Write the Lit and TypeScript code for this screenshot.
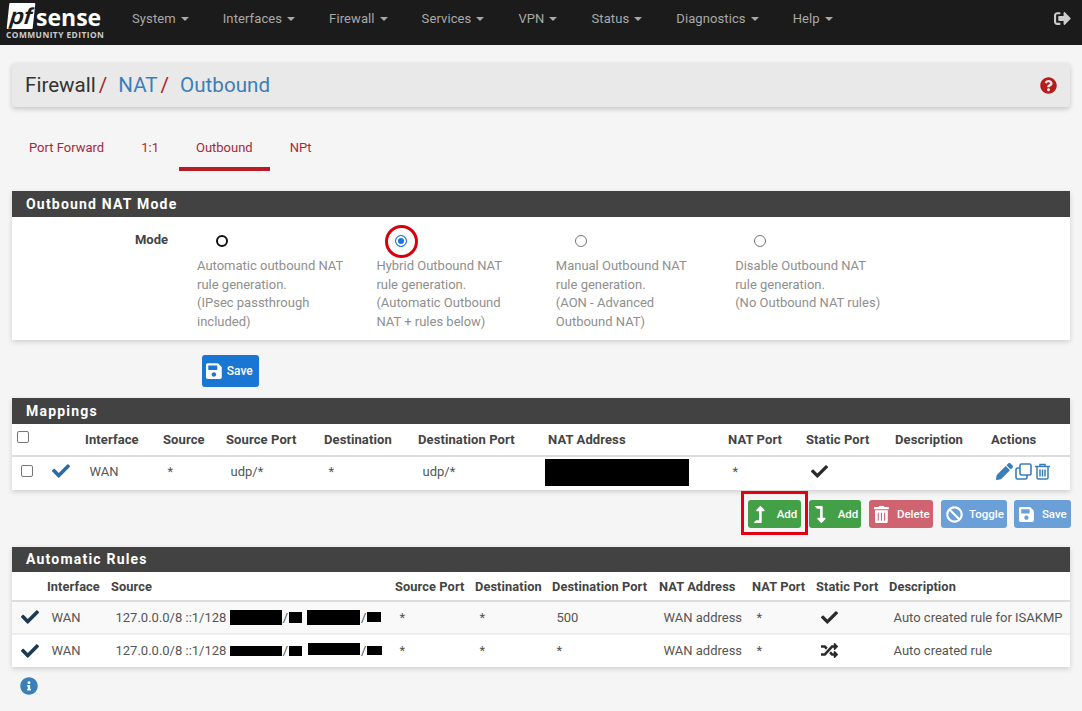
import { LitElement, html, css, svg } from 'lit';
import { customElement } from 'lit/decorators.js';

const icons: Record<string, [string, string]> = {
  check: ['0 0 512 512', 'M173.898 439.404l-166.4-166.4c-9.997-9.997-9.997-26.206 0-36.204l36.203-36.204c9.997-9.998 26.207-9.998 36.204 0L192 312.69 432.095 72.596c9.997-9.997 26.207-9.997 36.204 0l36.203 36.204c9.997 9.997 9.997 26.206 0 36.204l-294.4 294.401c-9.998 9.997-26.207 9.997-36.204-.001z'],
  save: ['0 0 448 512', 'M433.941 129.941l-83.882-83.882A48 48 0 0 0 316.118 32H48C21.49 32 0 53.49 0 80v352c0 26.51 21.49 48 48 48h352c26.51 0 48-21.49 48-48V163.882a48 48 0 0 0-14.059-33.941zM224 416c-35.346 0-64-28.654-64-64 0-35.346 28.654-64 64-64s64 28.654 64 64c0 35.346-28.654 64-64 64zm96-304.52V212c0 6.627-5.373 12-12 12H76c-6.627 0-12-5.373-12-12V108c0-6.627 5.373-12 12-12h228.52c3.183 0 6.235 1.264 8.485 3.515l3.48 3.48A11.996 11.996 0 0 1 320 111.48z'],
  question: ['0 0 512 512', 'M504 256c0 136.997-111.043 248-248 248S8 392.997 8 256C8 119.083 119.043 8 256 8s248 111.083 248 248zM262.655 90c-54.497 0-89.255 22.957-116.549 63.758-3.536 5.286-2.353 12.415 2.715 16.258l34.699 26.31c5.205 3.947 12.621 3.008 16.665-2.122 17.864-22.658 30.113-35.797 57.303-35.797 20.429 0 45.698 13.148 45.698 32.958 0 14.976-12.363 22.667-32.534 33.976C247.128 238.528 216 254.941 216 296v4c0 6.627 5.373 12 12 12h56c6.627 0 12-5.373 12-12v-1.333c0-28.462 83.186-29.647 83.186-106.667 0-58.002-60.165-102-116.531-102zM256 338c-25.365 0-46 20.635-46 46 0 25.364 20.635 46 46 46s46-20.636 46-46c0-25.365-20.635-46-46-46z'],
  info: ['0 0 512 512', 'M256 8C119.043 8 8 119.083 8 256c0 136.997 111.043 248 248 248s248-111.003 248-248C504 119.083 392.957 8 256 8zm0 110c23.196 0 42 18.804 42 42s-18.804 42-42 42-42-18.804-42-42 18.804-42 42-42zm56 254c0 6.627-5.373 12-12 12h-88c-6.627 0-12-5.373-12-12v-24c0-6.627 5.373-12 12-12h12v-64h-12c-6.627 0-12-5.373-12-12v-24c0-6.627 5.373-12 12-12h64c6.627 0 12 5.373 12 12v100h12c6.627 0 12 5.373 12 12v24z'],
  ban: ['0 0 512 512', 'M256 8C119.034 8 8 119.033 8 256s111.034 248 248 248 248-111.034 248-248S392.967 8 256 8zm130.108 117.892c65.448 65.448 70 165.481 20.677 235.637L150.47 105.216c70.204-49.356 170.226-44.735 235.638 20.676zM125.892 386.108c-65.448-65.448-70-165.481-20.677-235.637L361.53 406.784c-70.203 49.356-170.226 44.736-235.638-20.676z'],
  trash: ['0 0 448 512', 'M0 84V56c0-13.3 10.7-24 24-24h112l9.4-18.7c4-8.2 12.3-13.3 21.4-13.3h114.3c9.1 0 17.4 5.1 21.5 13.3L312 32h112c13.3 0 24 10.7 24 24v28c0 6.6-5.4 12-12 12H12C5.4 96 0 90.6 0 84zm416 56v324c0 26.5-21.5 48-48 48H80c-26.5 0-48-21.5-48-48V140c0-6.6 5.4-12 12-12h360c6.6 0 12 5.4 12 12zm-272 68c0-8.8-7.2-16-16-16s-16 7.2-16 16v224c0 8.8 7.2 16 16 16s16-7.2 16-16V208zm96 0c0-8.8-7.2-16-16-16s-16 7.2-16 16v224c0 8.8 7.2 16 16 16s16-7.2 16-16V208zm96 0c0-8.8-7.2-16-16-16s-16 7.2-16 16v224c0 8.8 7.2 16 16 16s16-7.2 16-16V208z'],
  pencil: ['0 0 512 512', 'M497.9 142.1l-46.1 46.1c-4.7 4.7-12.3 4.7-17 0l-111-111c-4.7-4.7-4.7-12.3 0-17l46.1-46.1c18.7-18.7 49.1-18.7 67.9 0l60.1 60.1c18.8 18.7 18.8 49.1 0 67.9zM284.2 99.8L21.6 362.4.4 483.9c-2.9 16.4 11.4 30.6 27.8 27.8l121.5-21.3 262.6-262.6c4.7-4.7 4.7-12.3 0-17l-111-111c-4.8-4.7-12.4-4.7-17.1 0z'],
  random: ['0 0 512 512', 'M504.971 359.029c9.373 9.373 9.373 24.569 0 33.941l-80 79.984c-15.01 15.01-40.971 4.49-40.971-16.971V416h-58.785a12.004 12.004 0 0 1-8.773-3.812l-70.556-75.596 53.333-57.143L352 336h32v-39.981c0-21.438 25.943-31.998 40.971-16.971l80 79.981zM12 176h84l52.781 56.551 53.333-57.143-70.556-75.596A11.999 11.999 0 0 0 122.785 96H12c-6.627 0-12 5.373-12 12v56c0 6.627 5.373 12 12 12zm372 0v39.984c0 21.46 25.961 31.98 40.971 16.971l80-79.984c9.373-9.373 9.373-24.569 0-33.941l-80-79.981C409.943 24.021 384 34.582 384 56.019V96h-58.785a12.004 12.004 0 0 0-8.773 3.812L96 336H12c-6.627 0-12 5.373-12 12v56c0 6.627 5.373 12 12 12h110.785c3.326 0 6.503-1.381 8.773-3.812L352 176h32z'],
  signout: ['0 0 512 512', 'M497 273L329 441c-15 15-41 4.5-41-17v-96H152c-13.3 0-24-10.7-24-24v-96c0-13.3 10.7-24 24-24h136V88c0-21.4 25.9-32 41-17l168 168c9.3 9.4 9.3 24.6 0 34zM192 436v-40c0-6.6-5.4-12-12-12H96c-17.7 0-32-14.3-32-32V160c0-17.7 14.3-32 32-32h84c6.6 0 12-5.4 12-12V76c0-6.6-5.4-12-12-12H96c-53 0-96 43-96 96v192c0 53 43 96 96 96h84c6.6 0 12-5.4 12-12z'],
  up: ['0 0 320 512', 'M313.553 119.669L209.587 7.666c-9.485-10.214-25.676-10.229-35.174 0L70.438 119.669C56.232 134.969 67.062 160 88.025 160H152v272H68.024a11.996 11.996 0 0 0-8.485 3.515l-56 56C-4.02 499.074 1.333 512 12.024 512H208c13.255 0 24-10.745 24-24V160h63.966c20.878 0 31.851-24.969 17.587-40.331z'],
  down: ['0 0 320 512', 'M313.553 392.331L209.587 504.334c-9.485 10.214-25.676 10.229-35.174 0L70.438 392.331C56.232 377.031 67.062 352 88.025 352H152V80H68.024a11.996 11.996 0 0 1-8.485-3.515l-56-56C-4.02 12.926 1.333 0 12.024 0H208c13.255 0 24 10.745 24 24v328h63.966c20.878 0 31.851 24.969 17.587 40.331z'],
};

const icon = (name: string, cls = '') => html`<svg class="ic ${cls}" viewBox=${icons[name][0]} fill="currentColor"><path d=${icons[name][1]}></path></svg>`;

const navItems = ['System', 'Interfaces', 'Firewall', 'Services', 'VPN', 'Status', 'Diagnostics', 'Help'];

const modes = [
  { lines: ['Automatic outbound NAT', 'rule generation.', '(IPsec passthrough', 'included)'], radio: 'focus' },
  { lines: ['Hybrid Outbound NAT', 'rule generation.', '(Automatic Outbound', 'NAT + rules below)'], radio: 'on' },
  { lines: ['Manual Outbound NAT', 'rule generation.', '(AON - Advanced', 'Outbound NAT)'], radio: '' },
  { lines: ['Disable Outbound NAT', 'rule generation.', '(No Outbound NAT rules)'], radio: '' },
];

const mapHead = ['', '', 'Interface', 'Source', 'Source Port', 'Destination', 'Destination Port', 'NAT Address', 'NAT Port', 'Static Port', 'Description', 'Actions'];
const autoHead = ['', 'Interface', 'Source', 'Source Port', 'Destination', 'Destination Port', 'NAT Address', 'NAT Port', 'Static Port', 'Description'];

@customElement('app-root')
export class AppRoot extends LitElement {
  static styles = css`
    :host {
      display: block;
      height: 711px;
      overflow: hidden;
      position: relative;
      background: #f5f5f5;
      font-family: Roboto, sans-serif;
      font-size: 13px;
      color: #555;
    }
    .ic { display: block; height: 1em; }

    nav {
      height: 45px;
      background: #1b1b1b;
      display: flex;
      align-items: center;
      padding: 0 11px 0 6px;
    }
    .logo { width: 126px; flex: none; color: #fff; margin-bottom: 2px; }
    .logo-top { display: flex; align-items: flex-start; height: 27px; }
    .pf {
      width: 26px;
      height: 26px;
      background: #fff;
      color: #1b1b1b;
      margin-left: 2px;
      font: italic 700 23px/26px "Liberation Sans", sans-serif;
      text-align: center;
      transform: skewX(-6deg);
      border-radius: 1px;
    }
    .sense { font: 700 23px/20px "Open Sans", sans-serif; margin: 4px 0 0 2px; }
    .edition { font: 700 8.4px/10px "Open Sans", sans-serif; letter-spacing: 0.45px; color: #ccc; white-space: nowrap; }
    .menu { display: flex; gap: 34px; flex: 1; color: #a9a9a9; font-size: 13px; letter-spacing: 0.1px; margin-bottom: 8px; }
    .menu span { display: flex; align-items: center; gap: 5px; }
    .caret { width: 0; height: 0; border: 4px solid transparent; border-top-color: #a9a9a9; border-bottom: 0; }
    .logout { font-size: 17px; color: #ccc; margin-bottom: 9px; }

    main { padding: 0 12px; }
    .crumbs {
      margin-top: 18px;
      height: 44px;
      background: #e9e9e9;
      border-radius: 3px;
      box-shadow: 0 2px 5px rgba(0, 0, 0, 0.2);
      display: flex;
      align-items: center;
      padding: 0 13px;
      font-size: 20.6px;
      color: #333;
    }
    .crumbs a { color: #3b7eb8; margin-left: 11px; }
    .crumbs i { font-style: normal; color: #a8232b; margin-left: 3px; }
    .crumbs .help { margin-left: auto; font-size: 17px; color: #b71c1c; }

    .tabs { display: flex; gap: 3px; margin-top: 18px; height: 46px; color: #a5283c; font-size: 13px; }
    .tabs span { padding: 15px 17px 0; box-sizing: border-box; }
    .tabs .active { border-bottom: 4px solid #b71c24; }

    .panel { box-shadow: 0 2px 5px rgba(0, 0, 0, 0.16); background: #fff; }
    .head {
      background: #424242;
      color: #fff;
      font-weight: 700;
      font-size: 14px;
      letter-spacing: 1.2px;
      height: 26px;
      line-height: 26px;
      padding-left: 14px;
    }
    .mode-panel { margin-top: 20px; }
    .mode-body { display: grid; grid-template-columns: 185px repeat(4, 179.4px); height: 123px; }
    .mode-label { text-align: right; padding: 15px 29px 0 0; font-weight: 700; color: #444; }
    .mode { padding-top: 16px; color: #8f8f8f; line-height: 18.6px; }
    .radio {
      width: 12px;
      height: 12px;
      box-sizing: border-box;
      border-radius: 50%;
      border: 1px solid #767676;
      margin: 2px 0 10px 19px;
      background: #fff;
    }
    .radio.focus { border: 2.5px solid #111; }
    .radio.on { border: 1.5px solid #1a73e8; background: #1a73e8; box-shadow: inset 0 0 0 2px #fff; }

    .btn {
      display: inline-flex;
      align-items: center;
      box-sizing: border-box;
      height: 28px;
      border-radius: 3px;
      color: #fff;
      font-size: 11.5px;
      font-weight: 500;
      white-space: nowrap;
    }
    .btn .ic { font-size: 17px; }
    .blue { background: #1976d2; }
    .save-row { padding: 15px 0 11px 190px; }
    .save-row .btn { height: 32px; width: 57px; padding-left: 4px; gap: 5px; font-size: 12px; }
    .save-row .btn .ic { font-size: 18px; }

    .row { display: grid; align-items: center; }
    .map { grid-template-columns: 33px 40px 78px 63px 98px 94px 130px 180px 78px 89px 96px 1fr; }
    .auto { grid-template-columns: 35px 64px 284px 80px 77px 107px 93px 64px 73px 1fr; }
    .th { font-weight: 700; color: #444; white-space: nowrap; letter-spacing: 0.1px; }
    .map.th { height: 33px; border-bottom: 2px solid #ddd; box-sizing: border-box; font-size: 13px; }
    .map.td { height: 33px; padding-bottom: 5px; box-sizing: border-box; color: #555; }
    .td > * { white-space: nowrap; }
    .map.td > *, .auto.td > * { padding-left: 4.5px; }
    .box { width: 12px; height: 12px; border: 1px solid #767676; border-radius: 2px; background: #fff; box-sizing: border-box; }
    .th .box { margin-left: 5px; margin-top: -5px; }
    .map.td > .box-wrap { padding-left: 9px; }
    .map.td > .mark { font-size: 18px; color: #2d6ca2; padding-left: 7px; }
    .dark { color: #2b2b2b; font-size: 17px; }
    .black { background: #000; }
    .nat { width: 144px; height: 27px; margin: 1px 0 -1px -7px; }
    .map.td > .nat-cell { padding-left: 4px; }
    .actions { display: flex; align-items: center; color: #3b7eb8; gap: 2px; font-size: 17px; }
    .clone { width: 17px; height: 17px; display: block; flex: none; }

    .buttons { display: flex; justify-content: flex-end; gap: 8px; padding: 10px 0 19px; margin-right: -1px; }
    .buttons .btn { padding-left: 5px; gap: 8px; }
    .green { background: #43a047; }
    .red { background: #cf6470; }
    .sky { background: #6a9fd8; }
    .buttons .b-up, .buttons .b-down { gap: 12px; width: 53px; padding-left: 6px; }
    .buttons .b-down { width: 52px; }
    .b-delete { width: 64px; }
    .buttons .b-toggle { width: 66px; gap: 6px; }
    .b-save { width: 57px; margin-left: -1px; }

    .auto.th { height: 30px; border-bottom: 2px solid #ddd; box-sizing: border-box; font-size: 12.8px; }
    .auto-head { height: 25px; line-height: 25px; }
    .auto.td { height: 32.5px; }
    .auto.td.shade { background: #f9f9f9; border-bottom: 2px solid #eee; box-sizing: border-box; }
    .auto.td > .tick { padding-left: 9px; color: #1e3a52; font-size: 18px; }
    .src { display: flex; align-items: center; color: #555; }
    .src i { font-style: normal; margin: 0 1px; }
    .info { font-size: 18px; color: #3b7eb8; margin: 10px 0 0 8px; }

    .mark-ring {
      position: absolute;
      left: 385px;
      top: 225px;
      width: 33px;
      height: 33px;
      box-sizing: border-box;
      border: 3px solid #d9000d;
      border-radius: 50%;
    }
    .mark-box {
      position: absolute;
      left: 741px;
      top: 491px;
      width: 67px;
      height: 44px;
      box-sizing: border-box;
      border: 3px solid #e3000f;
    }
  `;

  private redact(w: number, h: number, ml = 0, mt = 0) {
    return html`<b class="black" style="width:${w}px;height:${h}px;margin-left:${ml}px;margin-top:${mt}px"></b>`;
  }

  render() {
    return html`
      <nav>
        <div class="logo">
          <div class="logo-top"><div class="pf">pf</div><div class="sense">sense</div></div>
          <div class="edition">COMMUNITY EDITION</div>
        </div>
        <div class="menu">
          ${navItems.map((n) => html`<span>${n}<em class="caret"></em></span>`)}
        </div>
        <div class="logout">${icon('signout')}</div>
      </nav>
      <main>
        <div class="crumbs">
          Firewall<i>/</i><a>NAT</a><i>/</i><a>Outbound</a>
          <div class="help">${icon('question')}</div>
        </div>
        <div class="tabs">
          <span>Port Forward</span><span>1:1</span><span class="active">Outbound</span><span>NPt</span>
        </div>

        <section class="panel mode-panel">
          <div class="head">Outbound NAT Mode</div>
          <div class="mode-body">
            <div class="mode-label">Mode</div>
            ${modes.map((m) => html`<div class="mode">
              <div class="radio ${m.radio}"></div>
              ${m.lines.map((l) => html`<div>${l}</div>`)}
            </div>`)}
          </div>
        </section>
        <div class="save-row"><span class="btn blue">${icon('save')}Save</span></div>

        <section class="panel">
          <div class="head">Mappings</div>
          <div class="row map th">
            ${mapHead.map((h, i) => (i === 0 ? html`<div><div class="box"></div></div>` : html`<div>${h}</div>`))}
          </div>
          <div class="row map td">
            <div class="box-wrap"><div class="box"></div></div>
            <div class="mark">${icon('check')}</div>
            <div>WAN</div><div>*</div><div>udp/*</div><div>*</div><div>udp/*</div>
            <div class="nat-cell"><div class="black nat"></div></div>
            <div>*</div>
            <div class="dark">${icon('check')}</div>
            <div></div>
            <div class="actions">
              ${icon('pencil')}
              <svg class="clone" viewBox="0 0 17 17" fill="none" stroke="currentColor" stroke-width="1.6">
                ${svg`<rect x="5" y="1" width="11" height="11" rx="1.5"></rect><path d="M5 5H2.500A1.500 1.500 0 0 0 1 6.500V14.500A1.500 1.500 0 0 0 2.500 16H10.500A1.500 1.500 0 0 0 12 14.500V12"></path>`}
              </svg>
              <svg class="clone" viewBox="0 0 17 17" fill="none" stroke="currentColor" stroke-width="1.5">
                ${svg`<path d="M1 3.500H16M6 3V1.500H11V3M3 4V15A1.200 1.200 0 0 0 4.200 16H12.800A1.200 1.200 0 0 0 14 15V4M6 6.500V13.500M8.500 6.500V13.500M11 6.500V13.500"></path>`}
              </svg>
            </div>
          </div>
        </section>

        <div class="buttons">
          <span class="btn green b-up">${icon('up')}Add</span>
          <span class="btn green b-down">${icon('down')}Add</span>
          <span class="btn red b-delete">${icon('trash')}Delete</span>
          <span class="btn sky b-toggle">${icon('ban')}Toggle</span>
          <span class="btn sky b-save">${icon('save')}Save</span>
        </div>

        <section class="panel">
          <div class="head auto-head">Automatic Rules</div>
          <div class="row auto th">${autoHead.map((h) => html`<div>${h}</div>`)}</div>
          <div class="row auto td shade">
            <div class="tick">${icon('check')}</div>
            <div>WAN</div>
            <div class="src">127.0.0.0/8 ::1/128&nbsp;${this.redact(52, 15)}<i>/</i>${this.redact(13, 11)}${this.redact(53, 15, 5)}<i>/</i>${this.redact(14, 10)}</div>
            <div>*</div><div>*</div><div>500</div><div>WAN address</div><div>*</div>
            <div class="dark">${icon('check')}</div>
            <div>Auto created rule for ISAKMP</div>
          </div>
          <div class="row auto td">
            <div class="tick">${icon('check')}</div>
            <div>WAN</div>
            <div class="src">127.0.0.0/8 ::1/128&nbsp;${this.redact(52, 10)}<i>/</i>${this.redact(13, 10)}${this.redact(52, 12, 6, -3)}<i>/</i>${this.redact(15, 9)}</div>
            <div>*</div><div>*</div><div>*</div><div>WAN address</div><div>*</div>
            <div class="dark">${icon('random')}</div>
            <div>Auto created rule</div>
          </div>
        </section>
        <div class="info">${icon('info')}</div>
      </main>
      <div class="mark-ring"></div>
      <div class="mark-box"></div>
    `;
  }
}
